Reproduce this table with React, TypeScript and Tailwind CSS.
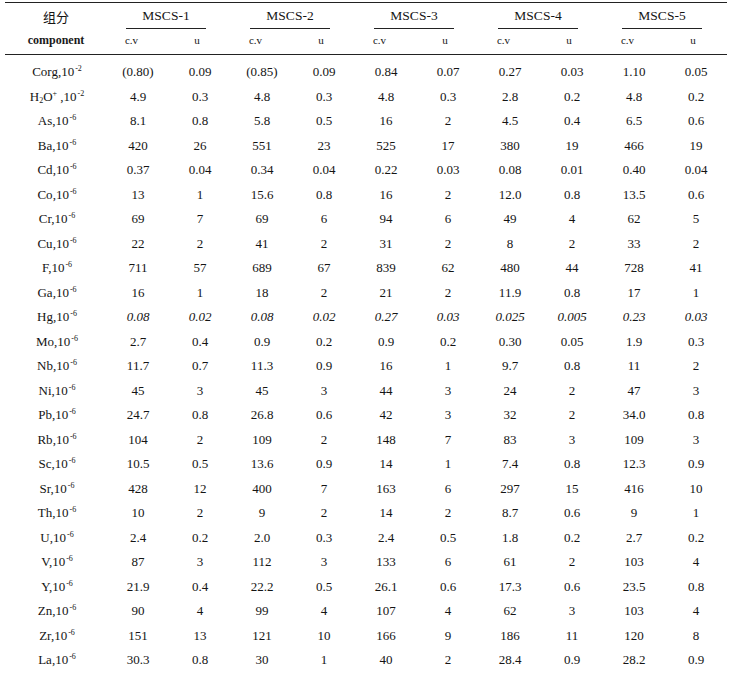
import React from "react";

type Row = { label: React.ReactNode; vals: string[]; italic?: boolean };

const Sup = ({ t }: { t: string }) => (
  <sup className="text-[8px] relative -top-[5px] ml-[1px]">{t}</sup>
);
const L = (el: string) => (
  <>
    {el},10
    <Sup t="-6" />
  </>
);

const rows: Row[] = [
  { label: <>Corg,10<Sup t="-2" /></>, vals: ["(0.80)", "0.09", "(0.85)", "0.09", "0.84", "0.07", "0.27", "0.03", "1.10", "0.05"] },
  {
    label: (
      <>
        H<sub className="text-[8px] relative -bottom-[2px]">2</sub>O<sup className="text-[8px] relative -top-[5px]">+</sup> ,10<Sup t="-2" />
      </>
    ),
    vals: ["4.9", "0.3", "4.8", "0.3", "4.8", "0.3", "2.8", "0.2", "4.8", "0.2"],
  },
  { label: L("As"), vals: ["8.1", "0.8", "5.8", "0.5", "16", "2", "4.5", "0.4", "6.5", "0.6"] },
  { label: L("Ba"), vals: ["420", "26", "551", "23", "525", "17", "380", "19", "466", "19"] },
  { label: L("Cd"), vals: ["0.37", "0.04", "0.34", "0.04", "0.22", "0.03", "0.08", "0.01", "0.40", "0.04"] },
  { label: L("Co"), vals: ["13", "1", "15.6", "0.8", "16", "2", "12.0", "0.8", "13.5", "0.6"] },
  { label: L("Cr"), vals: ["69", "7", "69", "6", "94", "6", "49", "4", "62", "5"] },
  { label: L("Cu"), vals: ["22", "2", "41", "2", "31", "2", "8", "2", "33", "2"] },
  { label: L("F"), vals: ["711", "57", "689", "67", "839", "62", "480", "44", "728", "41"] },
  { label: L("Ga"), vals: ["16", "1", "18", "2", "21", "2", "11.9", "0.8", "17", "1"] },
  { label: L("Hg"), vals: ["0.08", "0.02", "0.08", "0.02", "0.27", "0.03", "0.025", "0.005", "0.23", "0.03"], italic: true },
  { label: L("Mo"), vals: ["2.7", "0.4", "0.9", "0.2", "0.9", "0.2", "0.30", "0.05", "1.9", "0.3"] },
  { label: L("Nb"), vals: ["11.7", "0.7", "11.3", "0.9", "16", "1", "9.7", "0.8", "11", "2"] },
  { label: L("Ni"), vals: ["45", "3", "45", "3", "44", "3", "24", "2", "47", "3"] },
  { label: L("Pb"), vals: ["24.7", "0.8", "26.8", "0.6", "42", "3", "32", "2", "34.0", "0.8"] },
  { label: L("Rb"), vals: ["104", "2", "109", "2", "148", "7", "83", "3", "109", "3"] },
  { label: L("Sc"), vals: ["10.5", "0.5", "13.6", "0.9", "14", "1", "7.4", "0.8", "12.3", "0.9"] },
  { label: L("Sr"), vals: ["428", "12", "400", "7", "163", "6", "297", "15", "416", "10"] },
  { label: L("Th"), vals: ["10", "2", "9", "2", "14", "2", "8.7", "0.6", "9", "1"] },
  { label: L("U"), vals: ["2.4", "0.2", "2.0", "0.3", "2.4", "0.5", "1.8", "0.2", "2.7", "0.2"] },
  { label: L("V"), vals: ["87", "3", "112", "3", "133", "6", "61", "2", "103", "4"] },
  { label: L("Y"), vals: ["21.9", "0.4", "22.2", "0.5", "26.1", "0.6", "17.3", "0.6", "23.5", "0.8"] },
  { label: L("Zn"), vals: ["90", "4", "99", "4", "107", "4", "62", "3", "103", "4"] },
  { label: L("Zr"), vals: ["151", "13", "121", "10", "166", "9", "186", "11", "120", "8"] },
  { label: L("La"), vals: ["30.3", "0.8", "30", "1", "40", "2", "28.4", "0.9", "28.2", "0.9"] },
];

const groups = ["MSCS-1", "MSCS-2", "MSCS-3", "MSCS-4", "MSCS-5"];

export default function App() {
  return (
    <div className="w-[735px] h-[685px] bg-white text-[#141414] pt-[2px] pl-[5px] overflow-hidden font-['Liberation_Serif','Times_New_Roman',serif]">
      <div className="w-[722px] border-t-[1.5px] border-[#222]">
        {/* Header */}
        <div className="grid grid-cols-[102px_repeat(10,62px)] grid-rows-[27px_24px] border-b-[1.5px] border-[#222]">
          <div className="flex items-start justify-center pt-[6px] text-[13px] leading-[16px] font-['Noto_Sans_CJK_SC',sans-serif]">
            组分
          </div>
          {groups.map((g) => (
            <div key={g} className="col-span-2 flex flex-col items-center pr-[6px]">
              <div className="pt-[5px] text-[13.5px] leading-[16px]">{g}</div>
              <div className="mt-auto mb-[1px] w-[80px] h-[1.5px] bg-[#222]" />
            </div>
          ))}
          <div className="flex items-center justify-center pb-[4px] text-[12px] font-bold text-[#1a1a1a]">
            component
          </div>
          {groups.map((g) => (
            <React.Fragment key={g + "s"}>
              <div className="flex items-center justify-center pr-[13px] pb-[4px] text-[11px]">c.v</div>
              <div className="flex items-center justify-center pr-[6px] pb-[4px] text-[11px]">u</div>
            </React.Fragment>
          ))}
        </div>
        {/* Body */}
        <div className="pt-[5px]">
          {rows.map((r, i) => (
            <div
              key={i}
              className="grid grid-cols-[102px_repeat(10,62px)] h-[24.5px] items-center text-[13px] leading-[16px]"
            >
              <div className="text-center pl-[2px] whitespace-nowrap">{r.label}</div>
              {r.vals.map((v, j) => (
                <div key={j} className={r.italic ? "text-center italic" : "text-center"}>
                  {v}
                </div>
              ))}
            </div>
          ))}
        </div>
      </div>
    </div>
  );
}
